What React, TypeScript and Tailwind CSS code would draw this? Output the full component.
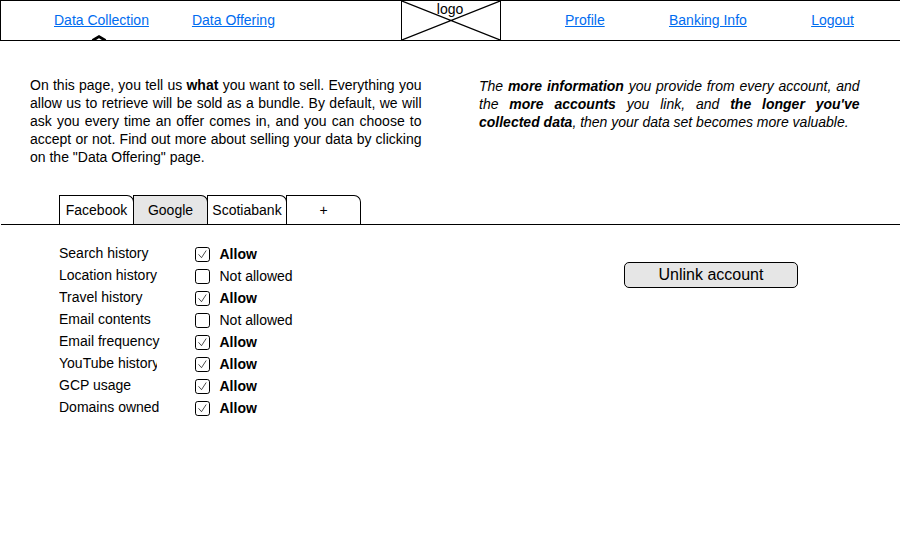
const items = [
  { name: 'Search history', allowed: true, width: 'w-[100px]' },
  { name: 'Location history', allowed: false, width: 'w-[100px]' },
  { name: 'Travel history', allowed: true, width: 'w-[100px]' },
  { name: 'Email contents', allowed: false, width: 'w-[100px]' },
  { name: 'Email frequency', allowed: true, width: 'w-[101px]' },
  { name: 'YouTube history', allowed: true, width: 'w-[98px]' },
  { name: 'GCP usage', allowed: true, width: 'w-[100px]' },
  { name: 'Domains owned', allowed: true, width: 'w-[101px]' },
];

const tabs = [
  { label: 'Facebook', style: 'w-[75px] bg-white' },
  { label: 'Google', style: 'w-[75px] bg-[#e6e6e6]' },
  { label: 'Scotiabank', style: 'w-[80px] bg-white' },
  { label: '+', style: 'w-[75px] bg-white' },
];

function NavLink({ label, className }: { label: string; className: string }) {
  return (
    <a href="#" className={`leading-[18px] whitespace-nowrap text-[#006cf0] underline ${className}`}>
      {label}
    </a>
  );
}

function Header() {
  return (
    <header className="relative flex h-[41px] border-y border-l border-black">
      <nav className="flex w-[400px] items-start pt-[10px]">
        <NavLink label="Data Collection" className="ml-[53px]" />
        <NavLink label="Data Offering" className="ml-[43px]" />
      </nav>
      <svg className="absolute top-[33px] left-[88px]" width="20" height="6" viewBox="0 0 20 6">
        <path d="M3.5 6.5L10 2.6L16.5 6.5" fill="none" stroke="#000" strokeWidth="2.8" />
      </svg>
      <div className="relative w-[100px] border-x border-black text-center leading-[18px]">
        <svg className="absolute inset-0" width="98" height="39" viewBox="0 0 98 39">
          <path d="M0 0L98 39M98 0L0 39" stroke="#000" strokeWidth="1.2" />
        </svg>
        <span className="relative top-[-1px] left-[-1px]">logo</span>
      </div>
      <nav className="flex items-start pt-[10px]">
        <NavLink label="Profile" className="ml-[64px]" />
        <NavLink label="Banking Info" className="ml-[64.3px]" />
        <NavLink label="Logout" className="ml-[64.3px]" />
      </nav>
    </header>
  );
}

function Checkbox({ checked }: { checked: boolean }) {
  return (
    <svg className="mt-px" width="16" height="16" viewBox="0 0 16 16" fill="none" stroke="#000">
      <rect x="1.5" y="1.5" width="14" height="14" rx="2.3" strokeWidth="1" />
      {checked && <path d="M4.5 8.3L7.5 11.7L12.2 4.5" strokeWidth="0.7" />}
    </svg>
  );
}

export default function App() {
  return (
    <div className="h-[550px] w-[900px] overflow-hidden bg-white font-['Liberation_Sans',Arial,sans-serif] text-[14px] text-black">
      <Header />
      <section className="flex h-[154px] gap-[57.5px] pt-[35px] pl-[30px] leading-[18px]">
        <p className="w-[391.5px] text-justify">
          On this page, you tell us <b>what</b> you want to sell. Everything you allow us to retrieve will be sold as a
          bundle. By default, we will ask you every time an offer comes in, and you can choose to accept or not. Find out
          more about selling your data by clicking on the "Data Offering" page.
        </p>
        <p className="w-[380.5px] pt-px text-justify italic">
          The <b>more information</b> you provide from every account, and the <b>more accounts</b> you link, and{' '}
          <b>the longer you've collected data</b>, then your data set becomes more valuable.
        </p>
      </section>
      <div className="ml-px flex h-[30px] border-b border-black pl-[58px]">
        {tabs.map((t) => (
          <div
            key={t.label}
            className={`-mr-px flex justify-center rounded-tr-[7px] border-x border-t border-black pt-[5px] leading-[18px] ${t.style}`}
          >
            {t.label}
          </div>
        ))}
      </div>
      <main className="flex pt-[19px] pl-[59px] leading-[18px]">
        <ul className="w-[565px]">
          {items.map((item) => (
            <li key={item.name} className="flex h-[22px]">
              <div className="w-[135px]">
                <div className={`overflow-hidden whitespace-nowrap ${item.width}`}>{item.name}</div>
              </div>
              <div className="flex gap-[9.5px] pt-px">
                <Checkbox checked={item.allowed} />
                <span className={item.allowed ? 'font-bold' : ''}>{item.allowed ? 'Allow' : 'Not allowed'}</span>
              </div>
            </li>
          ))}
        </ul>
        <button className="mt-[18px] h-[26px] w-[174px] rounded-[5px] border border-black bg-[#e6e6e6] text-[16px] leading-[24px]">
          Unlink account
        </button>
      </main>
    </div>
  );
}
